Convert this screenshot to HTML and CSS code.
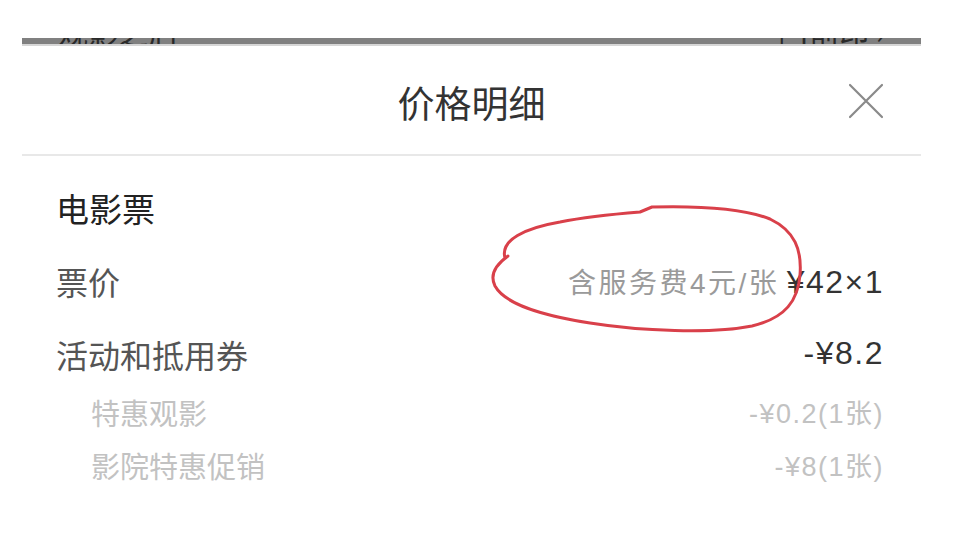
FILE: index.html
```html
<!DOCTYPE html>
<html lang="zh-CN">
<head>
  <meta charset="UTF-8" />
  <meta name="viewport" content="width=device-width, initial-scale=1.0"/>
  <title>价格明细</title>
  <link rel="stylesheet" href="styles.css">
</head>
<body>

<div class="page">
  <div class="peek">
    <span class="peek-left">观影之后</span>
    <span class="peek-right">| 4前印 ›</span>
  </div>

  <div class="sheet">
    <div class="sheet-head">
      <h2 class="title">价格明细</h2>
      <button class="close" aria-label="关闭">
        <svg viewBox="0 0 36 36" width="36" height="36">
          <path d="M2 2 L34 34 M34 2 L2 34" stroke="#8a8a8a" stroke-width="2.2" fill="none" stroke-linecap="round"/>
        </svg>
      </button>
    </div>

    <div class="detail">
      <div class="row section">电影票</div>
      <div class="row">
        <span class="label">票价</span>
        <span class="value"><span class="note">含服务费4元/张</span> ¥42×1</span>
      </div>
      <div class="row">
        <span class="label">活动和抵用券</span>
        <span class="value">-¥8.2</span>
      </div>
      <div class="subs">
        <div class="row sub">
          <span class="label">特惠观影</span>
          <span class="value">-¥0.2(1张)</span>
        </div>
        <div class="row sub">
          <span class="label">影院特惠促销</span>
          <span class="value">-¥8(1张)</span>
        </div>
      </div>
    </div>
  </div>

  <!-- hand-drawn circle over the service fee note -->
  <svg class="scribble" viewBox="0 0 980 541" width="980" height="541">
    <path d="M505 258 C500 240, 525 228, 560 222 C590 216, 615 214, 640 212 L652 207 C690 206, 740 207, 770 219 C795 231, 802 250, 800 275 C798 300, 786 318, 752 326 C712 334, 640 331, 590 323 C540 315, 505 304, 495 286 C490 276, 494 266, 508 256"
      stroke="#d9404a" stroke-width="3" fill="none" stroke-linecap="round" stroke-linejoin="round"/>
  </svg>
</div>

</body>
</html>
```

FILE: styles.css
```css
body {
  font-family: "Noto Sans CJK SC", "Noto Sans", sans-serif;
  background: #fff;
  color: #333;
  margin: 0;
  padding: 0;
}
.page {
  position: relative;
  width: 980px;
  height: 541px;
  overflow: hidden;
  padding-top: 38px;
  box-sizing: border-box;
}
/* sliver of the page behind the sheet */
.peek {
  margin: 0 59px 0 22px;
  height: 6px;
  background: #808080;
  border-bottom: 2px solid #d6d6d6;
  overflow: hidden;
  clip-path: inset(0);
  display: flex;
  justify-content: space-between;
  align-items: flex-end;
  padding: 0 36px;
  font-size: 30px;
  line-height: 30px;
  color: #2a2a2a;
}
.peek span {
  flex: none;
  height: 30px;
  margin-bottom: -2px;
}
.sheet {
  margin: 0 59px 0 22px;
}
.sheet-head {
  position: relative;
  height: 108px;
  border-bottom: 2px solid #e8e8e8;
  display: flex;
  align-items: center;
  justify-content: center;
}
.title {
  margin: 0;
  font-size: 37px;
  font-weight: 400;
  color: #333;
  line-height: 1;
  padding-top: 4px;
}
.close {
  position: absolute;
  right: 37px;
  top: 37px;
  width: 36px;
  height: 36px;
  padding: 0;
  border: none;
  background: none;
  cursor: pointer;
}
.close svg {
  display: block;
}
.detail {
  padding: 15px 37px 0 34px;
}
.row {
  display: flex;
  justify-content: space-between;
  align-items: center;
  height: 73px;
  font-size: 32px;
  color: #555;
}
.section {
  font-size: 33px;
  color: #222;
}
.value {
  font-family: "Liberation Sans", "Noto Sans CJK SC", sans-serif;
  color: #333;
  font-size: 32px;
  letter-spacing: 1.5px;
}
.note {
  color: #9a9a9a;
  font-size: 28px;
  letter-spacing: 2.5px;
  margin-right: -3px;
}
.subs {
  margin-top: -5px;
}
.sub {
  height: 53px;
  padding-left: 35px;
  font-size: 29px;
  color: #c2c2c2;
}
.sub .value {
  color: #c2c2c2;
  font-size: 27px;
  letter-spacing: 1.5px;
}
.scribble {
  position: absolute;
  left: 0;
  top: 0;
  pointer-events: none;
}
```
